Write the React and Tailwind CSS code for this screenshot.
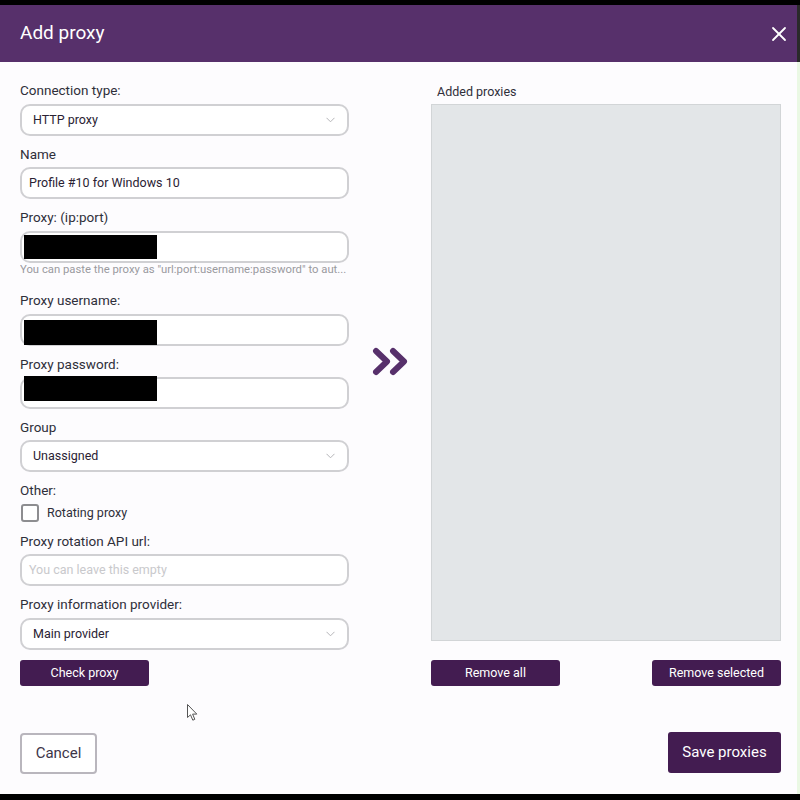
import { X } from "lucide-react";

const font = { fontFamily: "Roboto, 'Noto Sans', sans-serif" };

function Label({ children, className = "" }) {
  return (
    <div className={`h-5 leading-5 text-[13.5px] text-[#2f2f3a] ${className}`}>{children}</div>
  );
}

function Chevron() {
  return (
    <svg width="9" height="6" viewBox="0 0 9 6" className="shrink-0">
      <polyline points="0.5,0.8 4.5,4.8 8.5,0.8" fill="none" stroke="#b5b5b8" strokeWidth="1" />
    </svg>
  );
}

function Select({ value }) {
  return (
    <div className="h-8 rounded-[10px] border-2 border-[#d0d0d3] bg-white flex items-center justify-between pl-[11px] pr-[12px]">
      <span className="text-[12.5px] text-[#2a2233]">{value}</span>
      <Chevron />
    </div>
  );
}

function Input({ value, placeholder, masked }) {
  return (
    <div className="relative h-8 rounded-[10px] border-2 border-[#d0d0d3] bg-white flex items-center pl-[7px]">
      {value && <span className="text-[12.5px] text-[#2a2233]">{value}</span>}
      {placeholder && <span className="text-[12.5px] text-[#c9c9cc]">{placeholder}</span>}
      {masked && <div className={`absolute left-[2px] w-[133px] bg-black ${masked}`} />}
    </div>
  );
}

function DarkButton({ children, className = "" }) {
  return (
    <button className={`h-[26px] rounded-[3px] bg-[#431c51] text-white text-[12.5px] ${className}`}>
      {children}
    </button>
  );
}

export default function App() {
  return (
    <div className="w-[800px] h-[800px] bg-black pt-[5px] overflow-hidden" style={font}>
      <div className="w-[800px] h-[789px] flex">
        <div className="w-[797px] flex flex-col bg-[#fdfcfe]">
          <div className="h-[57px] bg-[#57306b] flex items-center justify-between pl-5 pr-[6px]">
            <span className="text-[19px] text-white">Add proxy</span>
            <X size={24} color="#fff" strokeWidth={1.8} />
          </div>

          <div className="flex pl-5 pr-4 pt-[18px]">
            {/* left column */}
            <div className="w-[329px] shrink-0 flex flex-col">
              <Label>Connection type:</Label>
              <div className="mt-1"><Select value="HTTP proxy" /></div>

              <Label className="mt-2">Name</Label>
              <div className="mt-[3px]"><Input value="Profile #10 for Windows 10" /></div>

              <Label className="mt-2">Proxy: (ip:port)</Label>
              <div className="mt-1"><Input masked="top-[2px] h-[24px]" /></div>
              <div className="h-[14px] leading-[14px] text-[11.3px] text-[#9a9a9e] whitespace-nowrap overflow-hidden">
                You can paste the proxy as "url:port:username:password" to aut...
              </div>

              <Label className="mt-[13px]">Proxy username:</Label>
              <div className="mt-1"><Input masked="top-[4px] h-[25px]" /></div>

              <Label className="mt-2">Proxy password:</Label>
              <div className="mt-[3px]"><Input masked="-top-[3px] h-[25px]" /></div>

              <Label className="mt-2">Group</Label>
              <div className="mt-[3px]"><Select value="Unassigned" /></div>

              <Label className="mt-2">Other:</Label>
              <div className="mt-[3px] h-5 flex items-center gap-2">
                <div className="w-[18px] h-[18px] ml-[1px] border-2 border-[#8d8d90] rounded-[3px] bg-white" />
                <span className="text-[12.5px] text-[#2f2f3a]">Rotating proxy</span>
              </div>

              <Label className="mt-2">Proxy rotation API url:</Label>
              <div className="mt-[3px]"><Input placeholder="You can leave this empty" /></div>

              <Label className="mt-2">Proxy information provider:</Label>
              <div className="mt-1"><Select value="Main provider" /></div>

              <DarkButton className="mt-[10px] w-[129px]">Check proxy</DarkButton>
            </div>

            {/* arrow */}
            <div className="w-[82px] shrink-0 flex justify-center pt-[267px]">
              <svg width="37" height="29" viewBox="0 0 37 29">
                <polyline points="4,4 15,14.5 4,25" fill="none" stroke="#57306b" strokeWidth="6" strokeLinecap="round" strokeLinejoin="round" />
                <polyline points="21,4 32,14.5 21,25" fill="none" stroke="#57306b" strokeWidth="6" strokeLinecap="round" strokeLinejoin="round" />
              </svg>
            </div>

            {/* right column */}
            <div className="w-[350px] shrink-0 flex flex-col">
              <div className="h-5 leading-5 text-[12.5px] text-[#2f2f3a] pl-[6px] pt-[2px]">Added proxies</div>
              <div className="mt-1 flex-1 bg-[#e3e6e8] border border-[#d2d5d7]" />
              <div className="mt-[19px] flex justify-between">
                <DarkButton className="w-[129px]">Remove all</DarkButton>
                <DarkButton className="w-[129px]">Remove selected</DarkButton>
              </div>
            </div>
          </div>

          <div className="relative flex-1">
            <svg className="absolute left-[187px] top-[18px]" width="12" height="18" viewBox="0 0 12 18">
              <path d="M0.5,0.5 L0.5,13.5 L3.5,10.8 L5.8,16.2 L7.8,15.3 L5.6,10.1 L9.8,10.1 Z" fill="#fff" stroke="#555" strokeWidth="1" />
            </svg>
          </div>

          <div className="flex justify-between items-end pl-5 pr-4 pb-5">
            <button className="w-[77px] h-[41px] rounded-[4px] border-2 border-[#b9b6bd] bg-white text-[15px] text-[#3d3548]">
              Cancel
            </button>
            <button className="w-[113px] h-[41px] mb-[1px] rounded-[3px] bg-[#431c51] text-white text-[15px]">
              Save proxies
            </button>
          </div>
        </div>
        <div className="w-[3px] flex flex-col">
          <div className="h-[57px] bg-[#2a2a2a]" />
          <div className="flex-1 bg-[#eaf8e4]" />
        </div>
      </div>
    </div>
  );
}
